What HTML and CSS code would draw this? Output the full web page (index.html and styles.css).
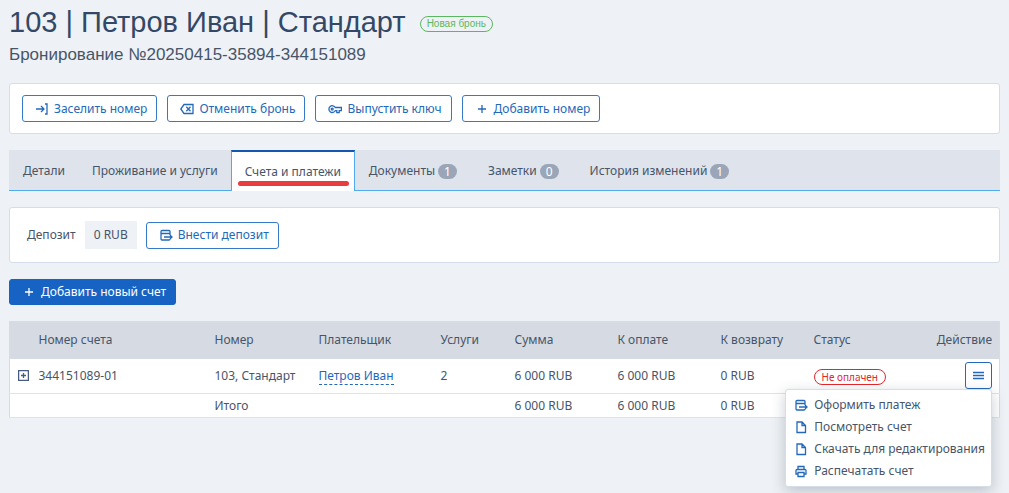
FILE: index.html
```html
<!DOCTYPE html>
<html lang="ru">
<head>
    <meta charset="UTF-8">
    <meta name="viewport" content="width=device-width, initial-scale=1.0">
    <title>Бронирование №20250415-35894-344151089</title>
    <link rel="stylesheet" href="styles.css">
</head>
<body>
    <header class="page-header">
        <div class="title-row">
            <h1>103 | Петров Иван | Стандарт</h1>
            <span class="label label-new">Новая бронь</span>
        </div>
        <p class="subtitle">Бронирование №20250415-35894-344151089</p>
    </header>

    <div class="panel toolbar">
        <button type="button" class="btn">
            <svg class="icon" viewBox="0 0 14 14"><path d="M1 7h8M6 4l3 3-3 3M10 2h2v10h-2"/></svg>
            Заселить номер
        </button>
        <button type="button" class="btn">
            <svg class="icon" viewBox="0 0 14 14"><path d="M4 2.5h9v9H4L.8 7zM6.3 4.8l4.2 4.4M10.5 4.8L6.3 9.2"/></svg>
            Отменить бронь
        </button>
        <button type="button" class="btn">
            <svg class="icon" viewBox="0 0 14 14"><path d="M7.300 5.500a3.400 3.400 0 1 0 0 3.200h1.500v2h2.400v-2h2.200V5.500z"/><circle cx="4.200" cy="7.100" r="1"/></svg>
            Выпустить ключ
        </button>
        <button type="button" class="btn">
            <svg class="icon" viewBox="0 0 14 14"><path d="M7 3v8M3 7h8"/></svg>
            Добавить номер
        </button>
    </div>

    <nav class="tabs">
        <a href="#details" class="tab">Детали</a>
        <a href="#services" class="tab">Проживание и услуги</a>
        <a href="#accounts" class="tab active">Счета и платежи</a>
        <a href="#documents" class="tab">Документы<span class="count">1</span></a>
        <a href="#notes" class="tab">Заметки<span class="count">0</span></a>
        <a href="#history" class="tab">История изменений<span class="count">1</span></a>
    </nav>

    <div class="panel deposit">
        <span>Депозит</span>
        <span class="amount">0 RUB</span>
        <button type="button" class="btn">
            <svg class="icon" viewBox="0 0 14 14"><path d="M11 7V3.500q0-1-1-1H3q-1 0-1 1V11q0 1 1 1h7q1 0 1-1M2 5.500h9M5 9h8M11 7l2 2-2 2"/></svg>
            Внести депозит
        </button>
    </div>

    <button type="button" class="btn btn-primary">
        <svg class="icon" viewBox="0 0 14 14"><path d="M7 3v8M3 7h8"/></svg>
        Добавить новый счет
    </button>

    <table class="accounts">
        <colgroup>
            <col class="col-toggle">
            <col class="col-account">
            <col class="col-room">
            <col class="col-payer">
            <col class="col-count">
            <col class="col-sum">
            <col class="col-sum">
            <col class="col-refund">
            <col>
            <col class="col-action">
        </colgroup>
        <thead>
            <tr>
                <th></th>
                <th>Номер счета</th>
                <th>Номер</th>
                <th>Плательщик</th>
                <th>Услуги</th>
                <th>Сумма</th>
                <th>К оплате</th>
                <th>К возврату</th>
                <th>Статус</th>
                <th class="action">Действие</th>
            </tr>
        </thead>
        <tbody>
            <tr>
                <td class="toggle-cell">
                    <button type="button" class="toggle" aria-label="Развернуть">
                        <svg viewBox="0 0 11 11"><path d="M.6.6h9.800v9.800H.6zM5.500 3v5M3 5.500h5"/></svg>
                    </button>
                </td>
                <td>344151089-01</td>
                <td>103, Стандарт</td>
                <td><a href="#payer" class="payer">Петров Иван</a></td>
                <td>2</td>
                <td>6 000 RUB</td>
                <td>6 000 RUB</td>
                <td>0 RUB</td>
                <td><span class="label label-unpaid">Не оплачен</span></td>
                <td class="action">
                    <div class="dropdown">
                        <button type="button" class="menu-button" aria-label="Действие">
                            <svg viewBox="0 0 11 9"><path d="M0 1.500h11M0 4.500h11M0 7.500h11"/></svg>
                        </button>
                        <div class="menu">
                            <a href="#pay">
                                <svg class="icon" viewBox="0 0 14 14"><path d="M11 7V3.500q0-1-1-1H3q-1 0-1 1V11q0 1 1 1h7q1 0 1-1M2 5.500h9M5 9h8M11 7l2 2-2 2"/></svg>
                                Оформить платеж
                            </a>
                            <a href="#view">
                                <svg class="icon" viewBox="0 0 14 14"><path d="M3 2h5l3.500 3.500V12.500H3zM8 2v3.500h3.500"/></svg>
                                Посмотреть счет
                            </a>
                            <a href="#download">
                                <svg class="icon" viewBox="0 0 14 14"><path d="M3 2h5l3.500 3.500V12.500H3zM8 2v3.500h3.500"/></svg>
                                Скачать для редактирования
                            </a>
                            <a href="#print">
                                <svg class="icon" viewBox="0 0 14 14"><path d="M4 5V2.500h6V5M4 10H2V6.500q0-1 1-1h8q1 0 1 1V10h-2M4 8.500h6v4H4z"/></svg>
                                Распечатать счет
                            </a>
                        </div>
                    </div>
                </td>
            </tr>
            <tr class="total">
                <td></td>
                <td></td>
                <td>Итого</td>
                <td></td>
                <td></td>
                <td>6 000 RUB</td>
                <td>6 000 RUB</td>
                <td>0 RUB</td>
                <td></td>
                <td></td>
            </tr>
        </tbody>
    </table>
</body>
</html>
```
FILE: styles.css
```css
* {
    box-sizing: border-box;
}

body {
    min-height: 100vh;
    margin: 0;
    padding: 4px 9px 0;
    background: #eef1f5;
    color: #475569;
    font-family: "Noto Sans", "Open Sans", sans-serif;
    font-size: 12px;
    line-height: 18px;
}

a {
    color: inherit;
    text-decoration: none;
}

button {
    font: inherit;
    cursor: pointer;
}

svg {
    fill: none;
    stroke: currentColor;
    stroke-width: 1.3;
}

.icon {
    width: 14px;
    height: 14px;
    flex-shrink: 0;
}

.page-header {
    font-family: "Liberation Sans", Arial, sans-serif;
}

.title-row {
    display: flex;
    align-items: center;
    gap: 14px;
}

h1 {
    margin: 0;
    color: #334866;
    font-size: 29px;
    font-weight: normal;
    line-height: 36px;
}

.subtitle {
    margin: 4px 0 18px;
    font-size: 17px;
    line-height: 21px;
}

.label {
    display: inline-block;
    border: 1px solid;
    border-radius: 8px;
    padding: 0 6px;
    font-size: 10px;
    line-height: 14px;
}

.label-new {
    margin-top: 3px;
    color: #5cb860;
}

.label-unpaid {
    padding: 0 7px;
    color: #e5262b;
    vertical-align: middle;
}

.panel {
    display: flex;
    align-items: center;
    background: #fff;
    border: 1px solid #d5dde8;
    border-radius: 3px;
}

.toolbar {
    gap: 10px;
    padding: 11px 12px;
}

.btn {
    display: inline-flex;
    align-items: center;
    gap: 5px;
    height: 27px;
    padding: 0 9px 0 12px;
    background: #fff;
    border: 1px solid #3579c8;
    border-radius: 3px;
    color: #2469b9;
}

.btn-primary {
    height: 26px;
    background: #1763c3;
    border-color: #1763c3;
    color: #fff;
}

.tabs {
    display: flex;
    height: 41px;
    margin: 16px 0;
    background: #dee3ec;
    border-bottom: 1px solid #53a9ee;
}

.tab {
    display: flex;
    align-items: center;
    padding: 2px 13px 0 14px;
}

.tab.active {
    position: relative;
    height: 41px;
    background: #fff;
    border: 1px solid #53a9ee;
    border-top: 2px solid #1257b0;
    border-bottom: none;
    padding: 0 13px;
}

.tab.active::after {
    content: "";
    position: absolute;
    left: 6px;
    right: 5px;
    bottom: 5px;
    height: 5px;
    border-radius: 3px;
    background: #e83c3f;
}

.count {
    margin: 0 4px 0 3px;
    padding: 0 6px;
    border-radius: 8px;
    background: #9aa6b8;
    color: #fff;
    line-height: 15px;
}

.deposit {
    gap: 9px;
    padding: 13px 17px;
}

.amount {
    padding: 5px 9px;
    background: #eef1f5;
}

.deposit + .btn {
    margin: 16px 0;
}

.accounts {
    width: 100%;
    table-layout: fixed;
    border-collapse: collapse;
    border: 1px solid #d6dce5;
    background: #fff;
}

.accounts th,
.accounts td {
    padding: 0;
    text-align: left;
    font-weight: normal;
    white-space: nowrap;
}

.accounts th {
    height: 37px;
    background: #d6dbe3;
}

.accounts td {
    height: 35px;
    border-bottom: 1px solid #dfe3e9;
}

.accounts .total td {
    height: 24px;
}

.accounts .action {
    padding-right: 7px;
    text-align: right;
}

.col-toggle {
    width: 29px;
}

.col-account {
    width: 176px;
}

.col-room {
    width: 104px;
}

.col-payer {
    width: 122px;
}

.col-count {
    width: 74px;
}

.col-sum {
    width: 103px;
}

.col-refund {
    width: 93px;
}

.col-action {
    width: 70px;
}

.toggle-cell {
    line-height: 0;
}

.toggle {
    width: 11px;
    height: 11px;
    margin-left: 8px;
    padding: 0;
    border: none;
    background: none;
    color: #475c80;
}

.toggle svg {
    display: block;
}

.payer {
    color: #2469b9;
    border-bottom: 1px dashed #2469b9;
}

.dropdown {
    position: relative;
    display: inline-block;
    vertical-align: middle;
}

.menu-button {
    display: flex;
    align-items: center;
    justify-content: center;
    width: 27px;
    height: 27px;
    padding: 0;
    background: #fff;
    border: 1px solid #2469b9;
    border-radius: 3px;
    color: #2469b9;
}

.menu-button svg {
    width: 11px;
    height: 9px;
}

.menu {
    position: absolute;
    top: 100%;
    right: 0;
    padding: 4px 6px 4px 8px;
    background: #fff;
    border: 1px solid #d5dde8;
    border-radius: 3px;
    box-shadow: 0 4px 14px rgba(40, 55, 80, 0.25);
}

.menu a {
    display: flex;
    align-items: center;
    gap: 6px;
    line-height: 22px;
}

.menu .icon {
    color: #2469b9;
}
```
